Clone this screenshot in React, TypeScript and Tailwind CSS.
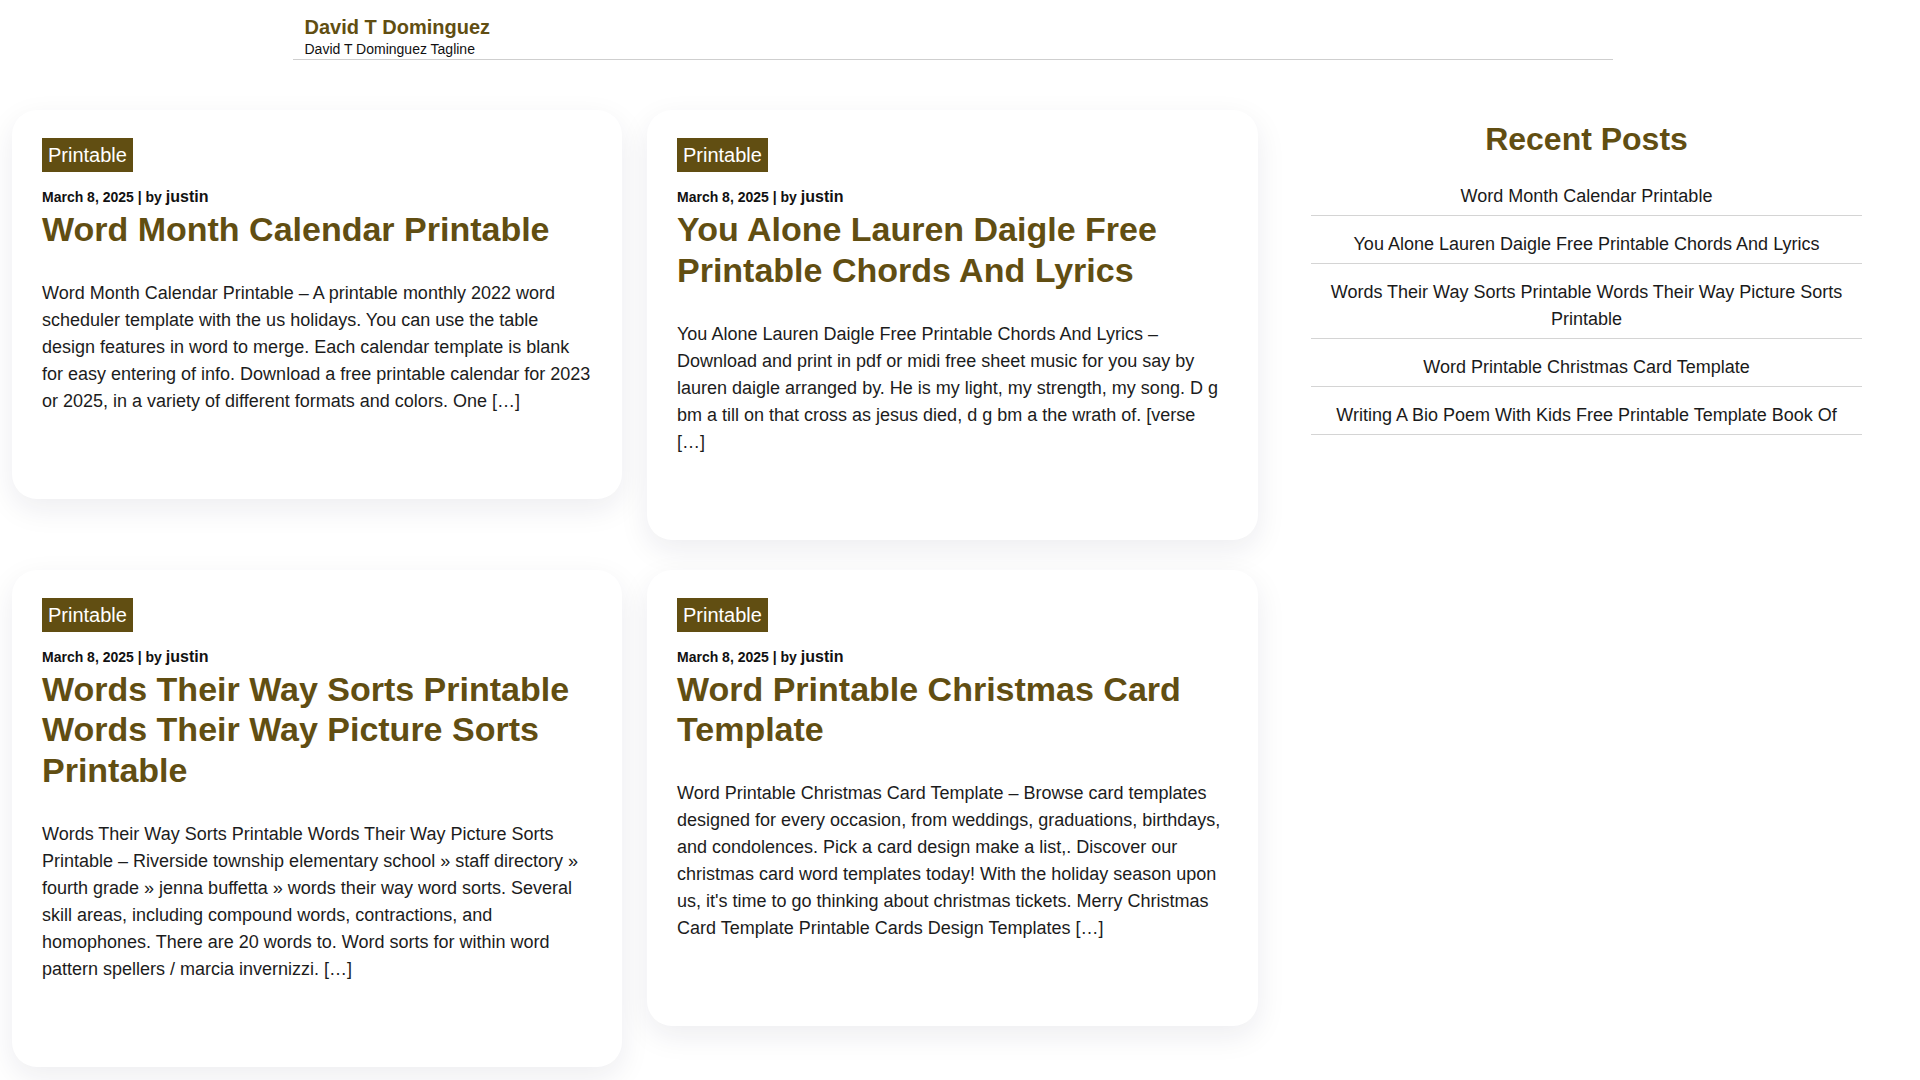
const posts = [
  {
    title: "Word Month Calendar Printable",
    excerpt:
      "Word Month Calendar Printable – A printable monthly 2022 word scheduler template with the us holidays. You can use the table design features in word to merge. Each calendar template is blank for easy entering of info. Download a free printable calendar for 2023 or 2025, in a variety of different formats and colors. One […]",
  },
  {
    title: "You Alone Lauren Daigle Free Printable Chords And Lyrics",
    excerpt:
      "You Alone Lauren Daigle Free Printable Chords And Lyrics – Download and print in pdf or midi free sheet music for you say by lauren daigle arranged by. He is my light, my strength, my song. D g bm a till on that cross as jesus died, d g bm a the wrath of. [verse […]",
  },
  {
    title: "Words Their Way Sorts Printable Words Their Way Picture Sorts Printable",
    excerpt:
      "Words Their Way Sorts Printable Words Their Way Picture Sorts Printable – Riverside township elementary school » staff directory » fourth grade » jenna buffetta » words their way word sorts. Several skill areas, including compound words, contractions, and homophones. There are 20 words to. Word sorts for within word pattern spellers / marcia invernizzi. […]",
  },
  {
    title: "Word Printable Christmas Card Template",
    excerpt:
      "Word Printable Christmas Card Template – Browse card templates designed for every occasion, from weddings, graduations, birthdays, and condolences. Pick a card design make a list,. Discover our christmas card word templates today! With the holiday season upon us, it's time to go thinking about christmas tickets. Merry Christmas Card Template Printable Cards Design Templates […]",
  },
];

const recent = [
  "Word Month Calendar Printable",
  "You Alone Lauren Daigle Free Printable Chords And Lyrics",
  "Words Their Way Sorts Printable Words Their Way Picture Sorts Printable",
  "Word Printable Christmas Card Template",
  "Writing A Bio Poem With Kids Free Printable Template Book Of",
];

function PostCard({ title, excerpt }: { title: string; excerpt: string }) {
  return (
    <article className="rounded-[25px] bg-white px-[30px] pb-[84px] pt-[28px] shadow-[0_10px_30px_rgba(30,20,60,0.08)]">
      <div>
        <span className="inline-block bg-[#614e12] px-[6px] py-[5px] text-[20px] leading-6 text-white">
          Printable
        </span>
      </div>
      <div className="mt-[15px] text-[14px] font-bold leading-5 text-[#111]">
        March 8, 2025 | by <span className="text-[16px]">justin</span>
      </div>
      <h2 className="mt-[2px] text-[34px] font-bold leading-[1.2] text-[#614e12]">{title}</h2>
      <p className="mt-[30px] text-[18px] leading-[27px] text-[#1c1c1c]">{excerpt}</p>
    </article>
  );
}

export default function App() {
  return (
    <div className="min-h-screen w-[1905px] bg-white pb-[120px] font-['Liberation_Sans',Arial,sans-serif] text-[#1a1a1a]">
      {/* Site header */}
      <header className="mx-auto w-[1320px] border-b border-[#cfcfcf] pl-3 pt-[15px]">
        <div className="text-[20px] font-bold leading-6 text-[#614e12]">David T Dominguez</div>
        <div className="text-[14px] leading-5 text-[#111]">David T Dominguez Tagline</div>
      </header>

      <div className="mt-[50px] flex items-start pl-3">
        {/* Posts grid */}
        <main className="grid grid-cols-[610px_611px] items-start gap-x-[25px] gap-y-[30px]">
          {posts.map((p) => (
            <PostCard key={p.title} title={p.title} excerpt={p.excerpt} />
          ))}
        </main>

        {/* Sidebar */}
        <aside className="ml-[53px] w-[551px] pt-[10px] text-center">
          <h2 className="text-[32px] font-bold leading-[1.2] text-[#614e12]">Recent Posts</h2>
          <ul className="mt-[10px]">
            {recent.map((r) => (
              <li
                key={r}
                className="border-b border-[#d4d4d4] pb-[5px] pt-[15px] text-[18px] leading-[27px] text-[#1a1a1a]"
              >
                {r}
              </li>
            ))}
          </ul>
        </aside>
      </div>
    </div>
  );
}
